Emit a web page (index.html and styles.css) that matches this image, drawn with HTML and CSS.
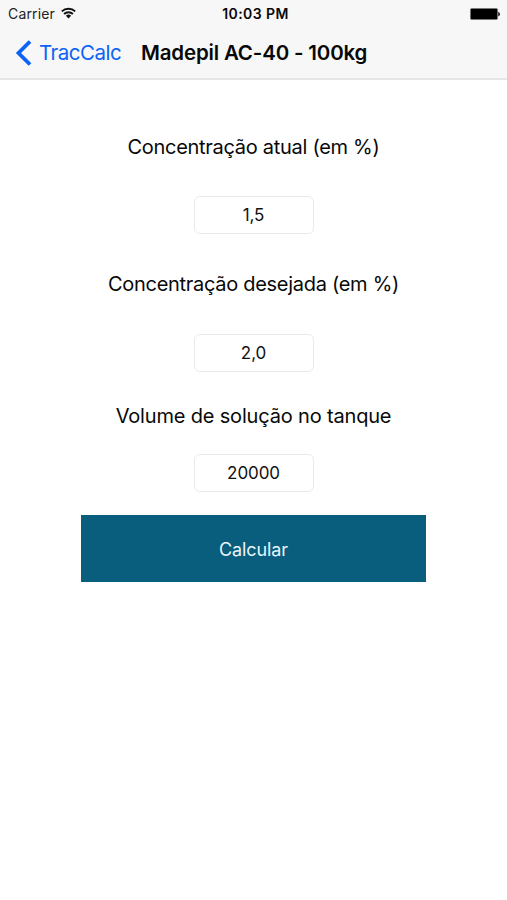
FILE: index.html
```html
<!DOCTYPE html>
<html lang="pt-BR">
<head>
<meta charset="utf-8">
<title>TracCalc</title>
<link rel="stylesheet" href="styles.css">
</head>
<body>
<header class="top">
  <div class="status">
    <div class="carrier"><span>Carrier</span>
      <svg class="wifi" width="15" height="12" viewBox="0 0 15 12"><g fill="none" stroke="#111" stroke-width="1.900"><path d="M.8 4.400a9.600 9.600 0 0 1 13.400 0"/><path d="M3.100 7a6.300 6.300 0 0 1 8.800 0"/></g><path d="M4.900 8.800a3.700 3.700 0 0 1 5.200 0L7.500 11.400z" fill="#111"/></svg>
    </div>
    <div class="time">10:03 PM</div>
    <svg class="battery" width="30" height="12" viewBox="0 0 30 12"><rect x=".4" y=".4" width="27.200" height="11.200" rx="1.500" fill="#000" stroke="#777" stroke-width=".8"/><path d="M28.200 4c2.400.7 2.400 3.600 0 4.300z" fill="#222"/></svg>
  </div>
  <nav class="nav">
    <a class="back"><svg class="chevron" width="17" height="26" viewBox="0 0 17 26"><path d="M15 1.500L3.500 13L15 24.500" fill="none" stroke="#0b63f6" stroke-width="3.800"/></svg><span>TracCalc</span></a>
    <h1 class="title">Madepil AC-40 - 100kg</h1>
  </nav>
</header>
<main class="form">
  <label class="label" for="current">Concentração atual (em %)</label>
  <input class="field" id="current" value="1,5">
  <label class="label desired" for="desired">Concentração desejada (em %)</label>
  <input class="field" id="desired" value="2,0">
  <label class="label volume" for="tank">Volume de solução no tanque</label>
  <input class="field" id="tank" value="20000">
  <button class="button">Calcular</button>
</main>
</body>
</html>
```
FILE: styles.css
```css
* { box-sizing: border-box; }
body { margin: 0; background: #fff; color: #080808; font-family: Inter, sans-serif; }
.top { height: 80px; background: #f7f7f7; border-bottom: 2px solid #e6e6e6; }
.status { height: 27px; display: grid; grid-template-columns: 1fr auto 1fr; align-items: center; padding: 0 7px 0 8px; font-size: 14px; }
.carrier { display: flex; align-items: center; gap: 6px; color: #222; letter-spacing: .15px; }
.wifi { margin-top: -2px; }
.time { font-weight: 600; letter-spacing: .4px; margin-left: 3px; }
.battery { justify-self: end; }
.nav { height: 51px; display: flex; align-items: center; padding-left: 15px; }
.back { display: flex; align-items: center; gap: 7px; width: 126px; color: #0b63f6; font-size: 20.5px; letter-spacing: -.5px; }
.chevron { flex: none; }
.title { margin: 0; font-size: 20.5px; font-weight: 600; letter-spacing: -.17px; white-space: nowrap; }
.form { display: flex; flex-direction: column; align-items: center; padding-top: 53px; }
.label { height: 28px; line-height: 29px; font-size: 20px; letter-spacing: -.29px; white-space: nowrap; }
.field { width: 120px; height: 38px; margin: 35px 0 0; padding: 0; border: 1px solid #e9e9e9; border-radius: 6px; background: #fff; color: #111; font: 17px Inter, sans-serif; letter-spacing: -.1px; text-align: center; }
.desired { margin-top: 36px; }
.desired + .field { margin-top: 36px; }
.volume { margin-top: 30px; letter-spacing: -.17px; }
.volume + .field { margin-top: 24px; }
.button { width: 345px; height: 67px; margin: 23px 0 0; padding: 1px 0 0; border: 0; background: #0a5e7d; color: #e8f5fa; font: 18px Inter, sans-serif; letter-spacing: -.1px; }
```
